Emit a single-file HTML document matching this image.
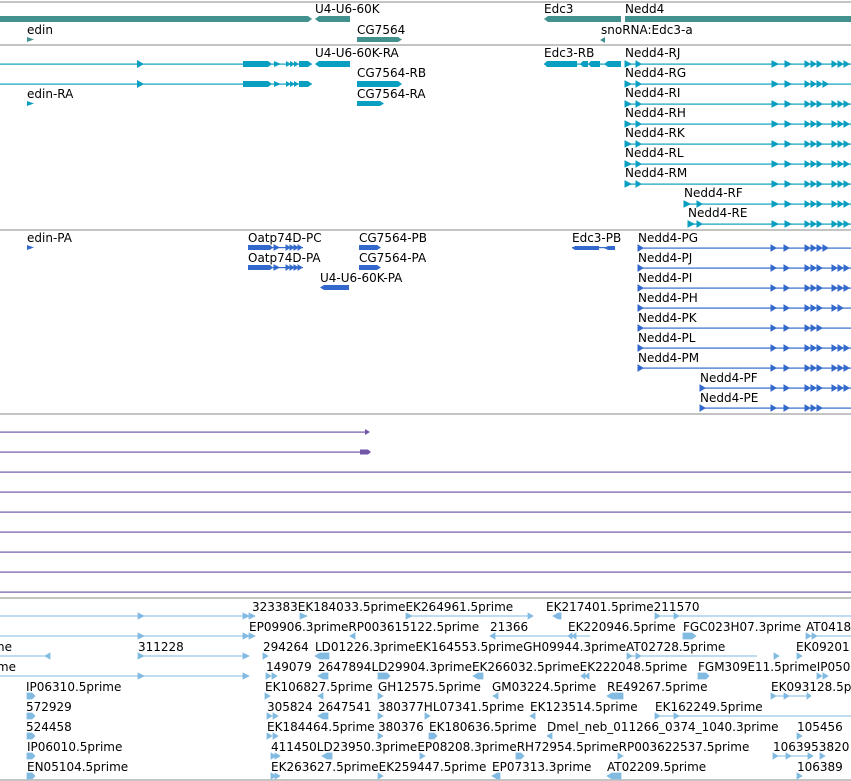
<!DOCTYPE html>
<html><head><meta charset="utf-8"><style>
html,body{margin:0;padding:0;background:#fff;width:851px;height:781px;overflow:hidden}
svg{display:block}
text{font-family:"DejaVu Sans","Liberation Sans",sans-serif;font-size:12px;fill:#000}
</style></head><body>
<svg width="851" height="781" viewBox="0 0 851 781" xmlns="http://www.w3.org/2000/svg">
<g fill="#c4c4c4">
<rect x="0" y="1" width="851" height="2"/>
<rect x="0" y="44" width="851" height="2"/>
<rect x="0" y="229" width="851" height="2"/>
<rect x="0" y="413" width="851" height="2"/>
<rect x="0" y="597" width="851" height="2"/>
<rect x="0" y="779" width="851" height="2"/>
</g>

<g fill="#42918f">
<polygon points="0,16 308,16 312,19 308,22 0,22"/>
<polygon points="315,19 319,16 350,16 350,22 319,22"/>
<polygon points="27,37 34,39.5 27,42"/>
<polygon points="357,37 398,37 402,39.5 398,42 357,42"/>
<polygon points="544,19 548,16 621,16 621,22 548,22"/>
<rect x="625" y="16" width="226" height="6"/>
<polygon points="600,40 605,37 605,43"/>
</g>
<text x="315" y="13">U4-U6-60K</text>
<text x="27" y="34">edin</text>
<text x="357" y="34">CG7564</text>
<text x="544" y="13">Edc3</text>
<text x="625" y="13">Nedd4</text>
<text x="601" y="34">snoRNA:Edc3-a</text>

<g fill="#0a9fc0">
<rect x="0" y="63.5" width="312" height="1.2"/>
<rect x="0" y="83.5" width="312" height="1.2"/>
<polygon points="137,60 144,64 137,68"/><polygon points="137,80 144,84 137,88"/>
<polygon points="243,61 268,61 272,64 268,67 243,67"/><polygon points="243,81 268,81 272,84 268,87 243,87"/>
<polygon points="274,61 281,64 274,67"/><polygon points="274,81 281,84 274,87"/>
<polygon points="286,61 291,64 286,67"/><polygon points="286,81 291,84 286,87"/>
<polygon points="290,61 295,64 290,67"/><polygon points="290,81 295,84 290,87"/>
<polygon points="294,61 299,64 294,67"/><polygon points="294,81 299,84 294,87"/>
<polygon points="299,61 308,61 312,64 308,67 299,67"/><polygon points="299,81 308,81 312,84 308,87 299,87"/>
<polygon points="315,64 319,61 350,61 350,67 319,67"/>
<polygon points="357,81 398,81 402,84 398,87 357,87"/>
<polygon points="357,101 380,101 384,103.5 380,106 357,106"/>
<polygon points="27,101 34,103.5 27,106"/>
<rect x="544" y="63.5" width="77" height="1.2"/>
<polygon points="544,64 547,61 577,61 577,67 547,67"/>
<polygon points="580,64 583,61 588,61 588,67 583,67"/>
<polygon points="588,64 591,61 600,61 600,67 591,67"/>
<polygon points="604,64 608,61 621,61 621,67 608,67"/>
</g>
<g fill="#0a9fc0">
<rect x="625" y="63.5" width="226" height="1.2"/>
<rect x="625" y="83.5" width="226" height="1.2"/>
<rect x="625" y="103.5" width="226" height="1.2"/>
<rect x="625" y="123.5" width="226" height="1.2"/>
<rect x="625" y="143.5" width="226" height="1.2"/>
<rect x="625" y="163.5" width="226" height="1.2"/>
<rect x="625" y="183.5" width="226" height="1.2"/>
<rect x="684" y="203.5" width="167" height="1.2"/>
<rect x="688" y="223.5" width="163" height="1.2"/>
</g>
<g fill="#0a9fc0" stroke="#0a9fc0" stroke-width="1" stroke-linejoin="miter">
<path d="M625 61l6 3-6 3zM636 61l5 3-5 3zM625 81l6 3-6 3zM636 81l5 3-5 3zM625 101l6 3-6 3zM636 101l5 3-5 3zM625 121l6 3-6 3zM636 121l5 3-5 3zM625 141l6 3-6 3zM636 141l5 3-5 3zM625 161l6 3-6 3zM636 161l5 3-5 3zM625 181l6 3-6 3zM636 181l5 3-5 3zM684 201l6 3-6 3zM697 201l5 3-5 3zM688 221l6 3-6 3zM697 221l5 3-5 3z"/>
<path d="M772 61l6 3-6 3zM785 61l6 3-6 3zM805 61l5 3-5 3zM811 61l5 3-5 3zM817 61l5 3-5 3zM832 61l5 3-5 3zM838 61l5 3-5 3zM844 61l5 3-5 3z
M772 81l6 3-6 3zM785 81l6 3-6 3zM805 81l5 3-5 3zM811 81l5 3-5 3zM817 81l5 3-5 3zM823 81l5 3-5 3z
M772 101l6 3-6 3zM785 101l6 3-6 3zM805 101l5 3-5 3zM811 101l5 3-5 3zM817 101l5 3-5 3zM832 101l5 3-5 3zM838 101l5 3-5 3zM844 101l5 3-5 3z
M772 121l6 3-6 3zM785 121l6 3-6 3zM805 121l5 3-5 3zM811 121l5 3-5 3zM817 121l5 3-5 3zM832 121l5 3-5 3zM838 121l5 3-5 3zM844 121l5 3-5 3z
M772 141l6 3-6 3zM785 141l6 3-6 3zM805 141l5 3-5 3zM811 141l5 3-5 3zM817 141l5 3-5 3zM832 141l5 3-5 3zM838 141l5 3-5 3zM844 141l5 3-5 3z
M772 161l6 3-6 3zM785 161l6 3-6 3zM805 161l5 3-5 3zM811 161l5 3-5 3zM817 161l5 3-5 3zM832 161l5 3-5 3zM838 161l5 3-5 3zM844 161l5 3-5 3z
M772 181l6 3-6 3zM785 181l6 3-6 3zM805 181l5 3-5 3zM811 181l5 3-5 3zM817 181l5 3-5 3zM832 181l5 3-5 3zM838 181l5 3-5 3zM844 181l5 3-5 3z
M772 201l6 3-6 3zM785 201l6 3-6 3zM805 201l5 3-5 3zM811 201l5 3-5 3zM817 201l5 3-5 3zM832 201l5 3-5 3zM838 201l5 3-5 3zM844 201l5 3-5 3z
M772 221l6 3-6 3zM785 221l6 3-6 3zM805 221l5 3-5 3zM811 221l5 3-5 3zM817 221l5 3-5 3zM832 221l5 3-5 3zM838 221l5 3-5 3zM844 221l5 3-5 3z"/>
</g>
<text x="315" y="57">U4-U6-60K-RA</text>
<text x="357" y="77">CG7564-RB</text>
<text x="27" y="98">edin-RA</text>
<text x="357" y="98">CG7564-RA</text>
<text x="544" y="57">Edc3-RB</text>
<text x="625" y="57">Nedd4-RJ</text>
<text x="625" y="77">Nedd4-RG</text>
<text x="625" y="97">Nedd4-RI</text>
<text x="625" y="117">Nedd4-RH</text>
<text x="625" y="137">Nedd4-RK</text>
<text x="625" y="157">Nedd4-RL</text>
<text x="625" y="177">Nedd4-RM</text>
<text x="684" y="197">Nedd4-RF</text>
<text x="688" y="217">Nedd4-RE</text>

<g fill="#3369cc">
<polygon points="27,245 34,247.5 27,250"/>
<polygon points="248,245 270,245 273,247.5 270,250 248,250"/><rect x="248" y="247" width="55" height="1.2"/>
<polygon points="248,265 270,265 273,267.5 270,270 248,270"/><rect x="248" y="267" width="55" height="1.2"/>
<polygon points="359,245 377,245 381,247.5 377,250 359,250"/>
<polygon points="359,265 377,265 381,267.5 377,270 359,270"/>
<polygon points="320,287.5 324,285 349,285 349,290 324,290"/>
<rect x="572" y="247" width="43" height="1.2"/>
<polygon points="572,248 575,246 599,246 599,250 575,250"/>
<polygon points="604,248 608,246 615,246 615,250 608,250"/>
<rect x="638" y="247.5" width="213" height="1.2"/>
<rect x="638" y="267.5" width="213" height="1.2"/>
<rect x="638" y="287.5" width="213" height="1.2"/>
<rect x="638" y="307.5" width="213" height="1.2"/>
<rect x="638" y="327.5" width="213" height="1.2"/>
<rect x="638" y="347.5" width="213" height="1.2"/>
<rect x="638" y="367.5" width="213" height="1.2"/>
<rect x="700" y="387.5" width="151" height="1.2"/>
<rect x="700" y="407.5" width="151" height="1.2"/>
</g>
<g fill="#3369cc" stroke="#3369cc" stroke-width="1">
<path d="M274 245l5 2.5-5 2.5zM286 245l4 2.5-4 2.5zM290 245l4 2.5-4 2.5zM294 245l4 2.5-4 2.5zM298 245l4 2.5-4 2.5z"/>
<path d="M274 265l5 2.5-5 2.5zM286 265l4 2.5-4 2.5zM290 265l4 2.5-4 2.5zM294 265l4 2.5-4 2.5zM298 265l4 2.5-4 2.5z"/>
<path d="M638 245l5 3-5 3zM638 265l5 3-5 3zM638 285l5 3-5 3zM638 305l5 3-5 3zM638 325l5 3-5 3zM638 345l5 3-5 3zM638 365l5 3-5 3zM700 385l5 3-5 3zM700 405l5 3-5 3z
M771 245l5 3-5 3zM784 245l5 3-5 3zM805 245l5 3-5 3zM811 245l5 3-5 3zM817 245l5 3-5 3zM823 245l5 3-5 3z
M771 265l5 3-5 3zM784 265l5 3-5 3zM805 265l5 3-5 3zM811 265l5 3-5 3zM817 265l5 3-5 3zM832 265l5 3-5 3zM838 265l5 3-5 3zM844 265l5 3-5 3z
M771 285l5 3-5 3zM784 285l5 3-5 3zM805 285l5 3-5 3zM811 285l5 3-5 3zM817 285l5 3-5 3zM832 285l5 3-5 3zM838 285l5 3-5 3zM844 285l5 3-5 3z
M771 305l5 3-5 3zM784 305l5 3-5 3zM805 305l5 3-5 3zM811 305l5 3-5 3zM817 305l5 3-5 3zM832 305l5 3-5 3zM838 305l5 3-5 3z
M771 325l5 3-5 3zM784 325l5 3-5 3zM805 325l5 3-5 3zM811 325l5 3-5 3zM817 325l5 3-5 3z
M771 345l5 3-5 3zM784 345l5 3-5 3zM805 345l5 3-5 3zM811 345l5 3-5 3zM817 345l5 3-5 3zM832 345l5 3-5 3zM838 345l5 3-5 3zM844 345l5 3-5 3z
M771 365l5 3-5 3zM784 365l5 3-5 3zM805 365l5 3-5 3zM811 365l5 3-5 3zM817 365l5 3-5 3zM832 365l5 3-5 3zM838 365l5 3-5 3zM844 365l5 3-5 3z
M771 385l5 3-5 3zM784 385l5 3-5 3zM805 385l5 3-5 3zM811 385l5 3-5 3zM817 385l5 3-5 3zM832 385l5 3-5 3zM838 385l5 3-5 3zM844 385l5 3-5 3z
M771 405l5 3-5 3zM784 405l5 3-5 3zM805 405l5 3-5 3zM811 405l5 3-5 3zM817 405l5 3-5 3z"/>
</g>
<text x="27" y="242">edin-PA</text>
<text x="248" y="242">Oatp74D-PC</text>
<text x="248" y="262">Oatp74D-PA</text>
<text x="359" y="242">CG7564-PB</text>
<text x="359" y="262">CG7564-PA</text>
<text x="320" y="282">U4-U6-60K-PA</text>
<text x="572" y="242">Edc3-PB</text>
<text x="638" y="242">Nedd4-PG</text>
<text x="638" y="262">Nedd4-PJ</text>
<text x="638" y="282">Nedd4-PI</text>
<text x="638" y="302">Nedd4-PH</text>
<text x="638" y="322">Nedd4-PK</text>
<text x="638" y="342">Nedd4-PL</text>
<text x="638" y="362">Nedd4-PM</text>
<text x="700" y="382">Nedd4-PF</text>
<text x="700" y="402">Nedd4-PE</text>

<g fill="#7257a8">
<rect x="0" y="431.5" width="365" height="1.2"/><polygon points="365,429 370,432 365,435"/>
<rect x="0" y="451.5" width="360" height="1.2"/><polygon points="360,449.5 368,449.5 371,452 368,454.5 360,454.5"/>
<rect x="0" y="471.5" width="851" height="1.2"/>
<rect x="0" y="491.5" width="851" height="1.2"/>
<rect x="0" y="511.5" width="851" height="1.2"/>
<rect x="0" y="531.5" width="851" height="1.2"/>
<rect x="0" y="551.5" width="851" height="1.2"/>
<rect x="0" y="571.5" width="851" height="1.2"/>
<rect x="0" y="591.5" width="851" height="1.2"/>
</g>

<g fill="#82bbe2">
<rect x="0" y="615.5" width="255" height="1"/><rect x="0" y="635.5" width="255" height="1"/>
<rect x="0" y="655.5" width="50" height="1"/><rect x="138" y="655.5" width="110" height="1"/>
<rect x="0" y="675.5" width="248" height="1"/>
<rect x="406" y="615.5" width="127" height="1"/><rect x="655" y="615.5" width="196" height="1"/>
<rect x="490" y="635.5" width="100" height="1"/><rect x="810" y="635.5" width="41" height="1"/>
<rect x="627" y="655.5" width="130" height="1"/>
<rect x="771" y="695.5" width="40" height="1"/><rect x="655" y="715.5" width="196" height="1"/>
<rect x="773" y="755.5" width="40" height="1"/>
</g>
<g fill="#82bbe2" stroke="#82bbe2" stroke-width="0.8">
<path d="M138 613l6 3-6 3zM138 633l6 3-6 3zM138 653l6 3-6 3zM138 673l6 3-6 3zM243 613l6 3-6 3zM249 613l6 3-6 3zM243 633l6 3-6 3zM249 633l6 3-6 3zM243 653l6 3-6 3zM243 673l6 3-6 3zM50 653l-5 3 5 3z
M300 613l7 3-7 3zM406 613l6 3-6 3zM528 613l5 3-5 3zM553 616l5-3h3v6h-3zM655 613l5 3-5 3zM674 613l5 3-5 3z
M350 636l5-3v6zM490 636l5-3v6zM568 636l4-3v6zM572 636l4-3v6zM683 633h9l4 3-4 3h-9zM806 633l5 3-5 3zM812 633l5 3-5 3z
M263 653l5 3-5 3zM315 656l5-3h9v6h-9zM627 653l5 3-5 3zM636 653l5 3-5 3zM774 653l5 3-5 3zM797 653l5 3-5 3z
M266 673l5 3-5 3zM272 673l5 3-5 3zM318 676l5-3h5v6h-5zM378 673h9l3 3-3 3h-9zM473 676l5-3h5v6h-5zM581 676l4-3v6zM585 676l4-3v6zM698 673h8l3 3-3 3h-8zM817 673l5 3-5 3zM823 673l5 3-5 3z
M265 693l5 3-5 3zM318 696l5-3v6zM378 693l5 3-5 3zM493 696l5-3v6zM607 696l5-3h11v6h-11zM771 693l5 3-5 3zM784 693l5 3-5 3zM807 693l4 3-4 3z
M267 713l5 3-5 3zM273 713l5 3-5 3zM318 716l5-3h5v6h-5zM378 713l5 3-5 3zM425 713l5 3-5 3zM530 716l5-3v6zM655 713l5 3-5 3zM674 713l5 3-5 3z
M267 733l5 3-5 3zM273 733l5 3-5 3zM378 733l5 3-5 3zM429 733h5l3 3-3 3h-5zM547 736l5-3v6zM797 733l5 3-5 3z
M271 753l5 3-5 3zM275 753l5 3-5 3zM322 756l5-3h5v6h-5zM420 753l5 3-5 3zM516 753h5l3 3-3 3h-5zM618 753l5 3-5 3zM773 753l5 3-5 3zM786 753l5 3-5 3zM808 753l5 3-5 3zM820 753l5 3-5 3z
M271 773l5 3-5 3zM275 773l5 3-5 3zM378 773l5 3-5 3zM492 776l5-3h3v6h-3zM607 776l5-3h9v6h-9zM797 773l5 3-5 3z
M27 693h5l3 3-3 3h-5zM27 713h5l3 3-3 3h-5zM27 733h5l3 3-3 3h-5zM27 753h5l3 3-3 3h-5zM27 773h5l3 3-3 3h-5z"/>
</g>
<g>
<text x="252" y="611">323383EK184033.5primeEK264961.5prime</text>
<text x="546" y="611">EK217401.5prime211570</text>
<text x="249" y="631">EP09906.3primeRP003615122.5prime</text>
<text x="490" y="631">21366</text>
<text x="568" y="631">EK220946.5prime</text>
<text x="683" y="631">FGC023H07.3prime</text>
<text x="806" y="631">AT0418</text>
<text x="12" y="651" text-anchor="end">5prime</text>
<text x="138" y="651">311228</text>
<text x="263" y="651">294264</text>
<text x="315" y="651">LD01226.3primeEK164553.5primeGH09944.3primeAT02728.5prime</text>
<text x="796" y="651">EK09201</text>
<text x="16" y="671" text-anchor="end">5prime</text>
<text x="266" y="671">149079</text>
<text x="318" y="671">2647894LD29904.3primeEK266032.5primeEK222048.5prime</text>
<text x="698" y="671">FGM309E11.5primeIP050</text>
<text x="26" y="691">IP06310.5prime</text>
<text x="265" y="691">EK106827.5prime</text>
<text x="378" y="691">GH12575.5prime</text>
<text x="492" y="691">GM03224.5prime</text>
<text x="607" y="691">RE49267.5prime</text>
<text x="771" y="691">EK093128.5p</text>
<text x="26" y="711">572929</text>
<text x="267" y="711">305824</text>
<text x="318" y="711">2647541</text>
<text x="378" y="711">380377HL07341.5prime</text>
<text x="530" y="711">EK123514.5prime</text>
<text x="655" y="711">EK162249.5prime</text>
<text x="26" y="731">524458</text>
<text x="267" y="731">EK184464.5prime</text>
<text x="378" y="731">380376</text>
<text x="429" y="731">EK180636.5prime</text>
<text x="547" y="731">Dmel_neb_011266_0374_1040.3prime</text>
<text x="797" y="731">105456</text>
<text x="27" y="751">IP06010.5prime</text>
<text x="271" y="751">411450LD23950.3primeEP08208.3primeRH72954.5primeRP003622537.5prime</text>
<text x="773" y="751">1063953820</text>
<text x="27" y="771">EN05104.5prime</text>
<text x="271" y="771">EK263627.5primeEK259447.5prime</text>
<text x="492" y="771">EP07313.3prime</text>
<text x="607" y="771">AT02209.5prime</text>
<text x="797" y="771">106389</text>
</g>
</svg>
</body></html>
